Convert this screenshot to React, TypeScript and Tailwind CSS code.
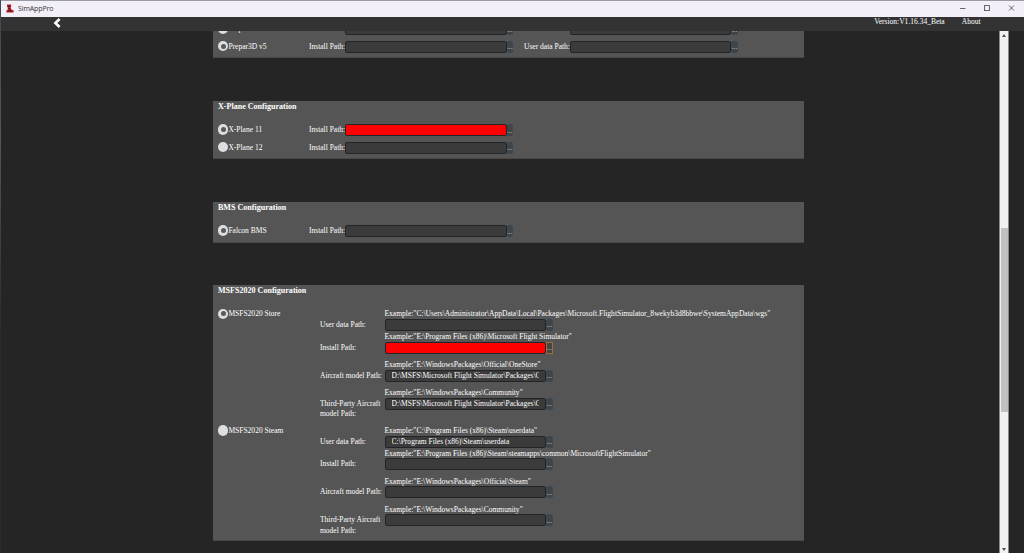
import { useState } from 'react';
import type { ReactNode } from 'react';

type FieldState = 'normal' | 'error';

const PathInput = ({
  value = '',
  state = 'normal',
  focused = false,
}: {
  value?: string;
  state?: FieldState;
  focused?: boolean;
}) => (
  <div className="flex h-[12px] shrink-0">
    <input
      readOnly
      value={value}
      className={`h-[12px] w-[161.5px] rounded-[2px] border border-[#222527] px-[6px] text-[7.52px] leading-[10px] text-white outline-none ${
        state === 'error' ? 'bg-[#ff0000]' : 'bg-[#3b3b3b]'
      }`}
    />
    <button
      className={`flex h-[12px] w-[6.5px] items-center justify-center border bg-[#444444] pt-[1px] text-[7.5px] leading-[8px] text-[#d8d8d8] ${
        focused ? 'border-[#947436]' : 'rounded-[2px] border-[#34495a]'
      }`}
    >
      ...
    </button>
  </div>
);

const Radio = ({ checked, onClick }: { checked: boolean; onClick: () => void }) => (
  <button
    onClick={onClick}
    className="flex size-[10.4px] shrink-0 items-center justify-center rounded-full bg-[#dedede]"
  >
    {checked && <span className="size-[5px] rounded-full bg-[#5a5a5a]" />}
  </button>
);

const Panel = ({ title, className, children }: { title?: string; className: string; children: ReactNode }) => (
  <section className={`w-[591px] border-b border-[#484848] bg-[#555555] ${className}`}>
    {title && <h2 className="h-[23px] pl-[5px] text-[8.05px] leading-[12.6px] font-bold">{title}</h2>}
    {children}
  </section>
);

// One simulator version with its install path and, for some, a user data path
const SimRow = ({
  name,
  checked,
  onSelect,
  state,
  userData = false,
}: {
  name: string;
  checked: boolean;
  onSelect: () => void;
  state?: FieldState;
  userData?: boolean;
}) => (
  <div className="mb-[5.7px] flex h-[12px] pl-[5px]">
    <div className="flex h-[11px] w-[91px] items-center">
      <Radio checked={checked} onClick={onSelect} />
      <span className="leading-[11px]">{name}</span>
    </div>
    <span className="w-[36px] leading-[11px]">Install Path:</span>
    <PathInput state={state} />
    {userData && (
      <>
        <span className="ml-[11px] w-[45.8px] leading-[11px]">User data Path:</span>
        <PathInput />
      </>
    )}
  </div>
);

interface MsfsField {
  label: ReactNode;
  example: string;
  value?: string;
  state?: FieldState;
  focused?: boolean;
  height: string;
}

const thirdPartyLabel = (
  <>
    Third-Party Aircraft
    <br />
    model Path:
  </>
);

const storeFields: MsfsField[] = [
  {
    label: 'User data Path:',
    example: 'C:\\Users\\Administrator\\AppData\\Local\\Packages\\Microsoft.FlightSimulator_8wekyb3d8bbwe\\SystemAppData\\wgs',
    height: 'h-[22.7px]',
  },
  {
    label: 'Install Path:',
    example: 'E:\\Program Files (x86)\\Microsoft Flight Simulator',
    state: 'error',
    focused: true,
    height: 'h-[28px]',
  },
  {
    label: 'Aircraft model Path:',
    example: 'E:\\WindowsPackages\\Official\\OneStore',
    value: 'D:\\MSFS\\Microsoft Flight Simulator\\Packages\\Official\\OneStore',
    height: 'h-[28px]',
  },
  {
    label: thirdPartyLabel,
    example: 'E:\\WindowsPackages\\Community',
    value: 'D:\\MSFS\\Microsoft Flight Simulator\\Packages\\Community',
    height: 'h-[38px]',
  },
];

const steamFields: MsfsField[] = [
  {
    label: 'User data Path:',
    example: 'C:\\Program Files (x86)\\Steam\\userdata',
    value: 'C:\\Program Files (x86)\\Steam\\userdata',
    height: 'h-[22.7px]',
  },
  {
    label: 'Install Path:',
    example: 'E:\\Program Files (x86)\\Steam\\steamapps\\common\\MicrosoftFlightSimulator',
    height: 'h-[28px]',
  },
  { label: 'Aircraft model Path:', example: 'E:\\WindowsPackages\\Official\\Steam', height: 'h-[28px]' },
  { label: thirdPartyLabel, example: 'E:\\WindowsPackages\\Community', height: 'h-[38px]' },
];

const MsfsGroup = ({
  name,
  fields,
  checked,
  onSelect,
}: {
  name: string;
  fields: MsfsField[];
  checked: boolean;
  onSelect: () => void;
}) => (
  <div className="flex pl-[5px]">
    <div className="flex h-[11px] w-[102px] items-center">
      <Radio checked={checked} onClick={onSelect} />
      <span>{name}</span>
    </div>
    <div>
      {fields.map((field, i) => (
        <div key={i} className={`flex ${field.height}`}>
          <div className="w-[64.5px] pt-[11.6px] leading-[10.6px]">{field.label}</div>
          <div>
            <div className="h-[10.7px] w-[400px] leading-[11.4px]">Example:"{field.example}"</div>
            <PathInput value={field.value} state={field.state} focused={field.focused} />
          </div>
        </div>
      ))}
    </div>
  </div>
);

const TitleBar = () => (
  <div className="flex h-[17px] items-center border-t border-[#9a9aa0] bg-[#f3eff8] pl-[5px]">
    <svg viewBox="0 0 8 9" className="mb-[1px] h-[9px] w-[8px]">
      <path d="M1 .6h4.2v1.6l-.5 1 .6 2.2 2.3.8V8.6H.4V6.4l1.4-.8-.1-2L1 2.6z" fill="#b3202a" />
      <path d="M2 2.4h2.6M2.4 4.4l2 .8M2 7h3.6" stroke="#4a1218" strokeWidth=".9" fill="none" />
    </svg>
    <span className="pb-[1px] pl-[4px] font-['Open_Sans','Noto_Sans',sans-serif] text-[7px] leading-[14px] tracking-[-0.1px] text-[#333333]">
      SimAppPro
    </span>
    <svg viewBox="0 0 60 10" className="mr-[9px] mb-[1.5px] ml-auto h-[10px] w-[60px]" fill="none" stroke="#444444" strokeWidth=".8">
      <path d="M5 5.5h5.5" />
      <rect x="29.5" y="2.6" width="5" height="5" />
      <path d="M54 2.5l5 5M59 2.5l-5 5" />
    </svg>
  </div>
);

const Header = () => (
  <header className="flex h-[13.5px] items-start bg-[#333333] pl-[52px]">
    <svg viewBox="0 0 8 10" className="mt-[1px] h-[10px] w-[8px]" fill="none" stroke="#ffffff" strokeWidth="2.6">
      <path d="M6.6 1L2.4 5l4.2 4" />
    </svg>
    <nav className="mr-[43.5px] ml-auto flex gap-[17px] leading-[10px]">
      <span>Version:V1.16.34_Beta</span>
      <span>About</span>
    </nav>
  </header>
);

const Scrollbar = () => (
  <div className="mr-[15px] flex w-[10px] flex-col items-center border-x border-[#8b8b8b] bg-[#f1f1f1]">
    <svg viewBox="0 0 4 3" className="mt-[3.5px] h-[3px] w-[4px] shrink-0" fill="#505050">
      <path d="M0 3l2-3 2 3z" />
    </svg>
    <div className="mt-[191px] h-[184px] w-[7px] shrink-0 bg-[#c1c1c1]" />
    <svg viewBox="0 0 4 3" className="mt-auto mb-[2px] h-[3px] w-[4px] shrink-0" fill="#505050">
      <path d="M0 0l2 3 2-3z" />
    </svg>
  </div>
);

const App = () => {
  const [prepar, setPrepar] = useState('v5');
  const [xplane, setXplane] = useState('11');
  const [msfs, setMsfs] = useState('store');

  return (
    <div className="flex h-[553px] w-[1024px] overflow-hidden font-['Liberation_Serif',serif] text-[7.52px] whitespace-nowrap text-white">
      {/* Desktop showing behind the window edge */}
      <div className="w-px bg-linear-to-b from-[#3d4852] via-[#52585b] via-25% to-[#252c38] to-60%" />
      <div className="flex w-[1023px] flex-col">
        <TitleBar />
        <Header />
        <div className="flex min-h-0 flex-1 bg-[#252525]">
          <main className="min-w-0 flex-1 overflow-hidden pl-[212px]">
            {/* Rows of the Prepar3D panel, scrolled partly out of view */}
            <Panel className="-mt-[7.5px] h-[35px]">
              <SimRow name="Prepar3D v4" checked={false} onSelect={() => setPrepar('v4')} userData />
              <SimRow name="Prepar3D v5" checked={prepar === 'v5'} onSelect={() => setPrepar('v5')} userData />
            </Panel>
            <Panel title="X-Plane Configuration" className="mt-[43px] h-[58px]">
              <SimRow name="X-Plane 11" checked={xplane === '11'} onSelect={() => setXplane('11')} state="error" />
              <SimRow name="X-Plane 12" checked={xplane === '12'} onSelect={() => setXplane('12')} />
            </Panel>
            <Panel title="BMS Configuration" className="mt-[43px] h-[40.5px]">
              <SimRow name="Falcon BMS" checked onSelect={() => {}} />
            </Panel>
            <Panel title="MSFS2020 Configuration" className="mt-[42.8px] h-[256px]">
              <MsfsGroup name="MSFS2020 Store" fields={storeFields} checked={msfs === 'store'} onSelect={() => setMsfs('store')} />
              <MsfsGroup name="MSFS2020 Steam" fields={steamFields} checked={msfs === 'steam'} onSelect={() => setMsfs('steam')} />
            </Panel>
          </main>
          <Scrollbar />
        </div>
      </div>
    </div>
  );
};

export default App;
